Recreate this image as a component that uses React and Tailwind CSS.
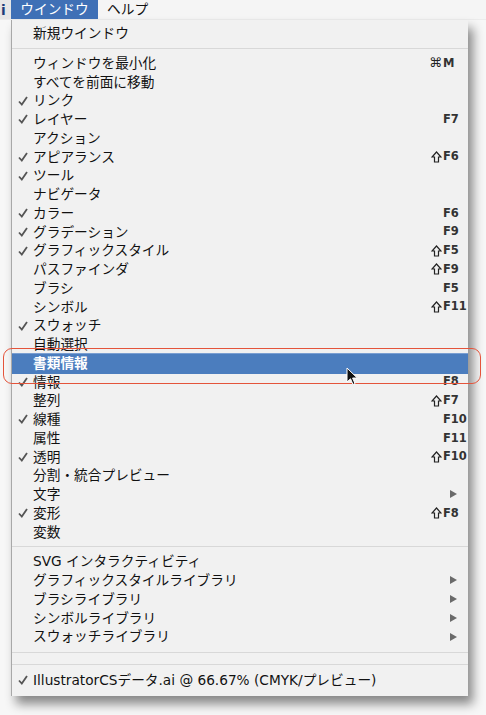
import React from "react";

const font = {
  fontFamily: '"DejaVu Sans", "Noto Sans CJK JP", sans-serif',
};

const items = [
  { label: "ウィンドウを最小化", mod: "⌘", key: "M" },
  { label: "すべてを前面に移動" },
  { label: "リンク", check: true },
  { label: "レイヤー", check: true, key: "F7" },
  { label: "アクション" },
  { label: "アピアランス", check: true, mod: "⇧", key: "F6" },
  { label: "ツール", check: true },
  { label: "ナビゲータ" },
  { label: "カラー", check: true, key: "F6" },
  { label: "グラデーション", check: true, key: "F9" },
  { label: "グラフィックスタイル", check: true, mod: "⇧", key: "F5" },
  { label: "パスファインダ", mod: "⇧", key: "F9" },
  { label: "ブラシ", key: "F5" },
  { label: "シンボル", mod: "⇧", key: "F11" },
  { label: "スウォッチ", check: true },
  { label: "自動選択" },
  { label: "書類情報", active: true },
  { label: "情報", check: true, key: "F8" },
  { label: "整列", mod: "⇧", key: "F7" },
  { label: "線種", check: true, key: "F10" },
  { label: "属性", key: "F11" },
  { label: "透明", check: true, mod: "⇧", key: "F10" },
  { label: "分割・統合プレビュー" },
  { label: "文字", sub: true },
  { label: "変形", check: true, mod: "⇧", key: "F8" },
  { label: "変数" },
];

const libs = [
  { label: "SVG インタラクティビティ" },
  { label: "グラフィックスタイルライブラリ", sub: true },
  { label: "ブラシライブラリ", sub: true },
  { label: "シンボルライブラリ", sub: true },
  { label: "スウォッチライブラリ", sub: true },
];

const Check = () => (
  <svg width="10" height="10" viewBox="0 0 10 10">
    <path d="M1 5.5 L3.8 8.5 L9 1" fill="none" stroke="#555" strokeWidth="1.8" />
  </svg>
);

// outlined shift arrow, the bundled fonts draw it too small
const Shift = () => (
  <svg width="11" height="12" viewBox="0 0 11 12" className="inline-block">
    <path d="M5.5 1 L10 6 L7.5 6 L7.5 11 L3.5 11 L3.5 6 L1 6 Z" fill="none" stroke="#222" strokeWidth="1.2" strokeLinejoin="miter" />
  </svg>
);

const Row = ({ item }) => {
  if (item.active) {
    return (
      <div className="flex items-center h-[20.75px] -my-px bg-[#4b7dbe] border-t border-[#7a9fd2] text-white font-bold">
        <span className="w-[21px]" />
        <span className="flex-1">{item.label}</span>
      </div>
    );
  }
  return (
    <div className="flex items-center h-[18.75px] text-[#111]">
      <span className="w-[21px] pl-[6px] flex items-center">
        {item.check && <Check />}
      </span>
      <span className="flex-1 whitespace-nowrap">{item.label}</span>
      <span className="w-[15px] mr-px flex justify-end items-center text-[13px] text-[#222]">
        {item.mod === "⇧" ? <Shift /> : item.mod}
      </span>
      <span className="w-[25px] text-[11.5px] font-bold text-[#333]">
        {item.sub ? (
          <svg width="7" height="8" viewBox="0 0 7 8" className="ml-[7px]">
            <path d="M0 0 L7 4 L0 8 Z" fill="#6a6a6a" />
          </svg>
        ) : (
          item.key
        )}
      </span>
    </div>
  );
};

const Sep = ({ h = "h-[11px]" }) => (
  <div className={`${h} flex items-center`}>
    <div className="w-full h-px bg-[#d8d8d8]" />
  </div>
);

export default function App() {
  return (
    <div
      className="relative w-[486px] h-[715px] bg-[#f7f7f7] overflow-hidden text-[13.7px]"
      style={font}
    >
      <div className="flex h-[20px] items-center bg-[#f5f5f5] border-b border-[#ececec]">
        <span className="w-[11px] h-full bg-[#e6e6e6] text-[#1c3d7a] font-bold leading-[20px] pl-px">
          i
        </span>
        <span className="h-full w-[87px] bg-[#3f70b6] text-white flex items-center justify-center">
          ウインドウ
        </span>
        <span className="ml-[9px] text-[#111]">ヘルプ</span>
      </div>

      <div className="ml-[11px] w-[457px] bg-[#f1f1f1] border-l border-[#a8a8a8] pt-[4px] pb-[6px] shadow-[5px_8px_10px_rgba(0,0,0,0.45)]">
        <Row item={{ label: "新規ウインドウ" }} />
        <Sep />
        {items.map((it) => (
          <Row key={it.label} item={it} />
        ))}
        <Sep />
        {libs.map((it) => (
          <Row key={it.label} item={it} />
        ))}
        <Sep h="h-[12.5px]" />
        <Sep h="h-[12.5px]" />
        <Row item={{ label: "IllustratorCSデータ.ai @ 66.67% (CMYK/プレビュー)", check: true }} />
      </div>

      <div className="absolute left-[3px] top-[348px] w-[478px] h-[36px] rounded-[9px] border-[1.5px] border-[#e4543b]" />

      <svg className="absolute left-[346px] top-[367px]" width="13" height="19" viewBox="0 0 13 19">
        <path d="M1 1 L1 15 L4.5 11.8 L7 17.5 L9 16.6 L6.6 11 L11.3 11 Z" fill="#111" stroke="#fff" strokeWidth="1" />
      </svg>
    </div>
  );
}
